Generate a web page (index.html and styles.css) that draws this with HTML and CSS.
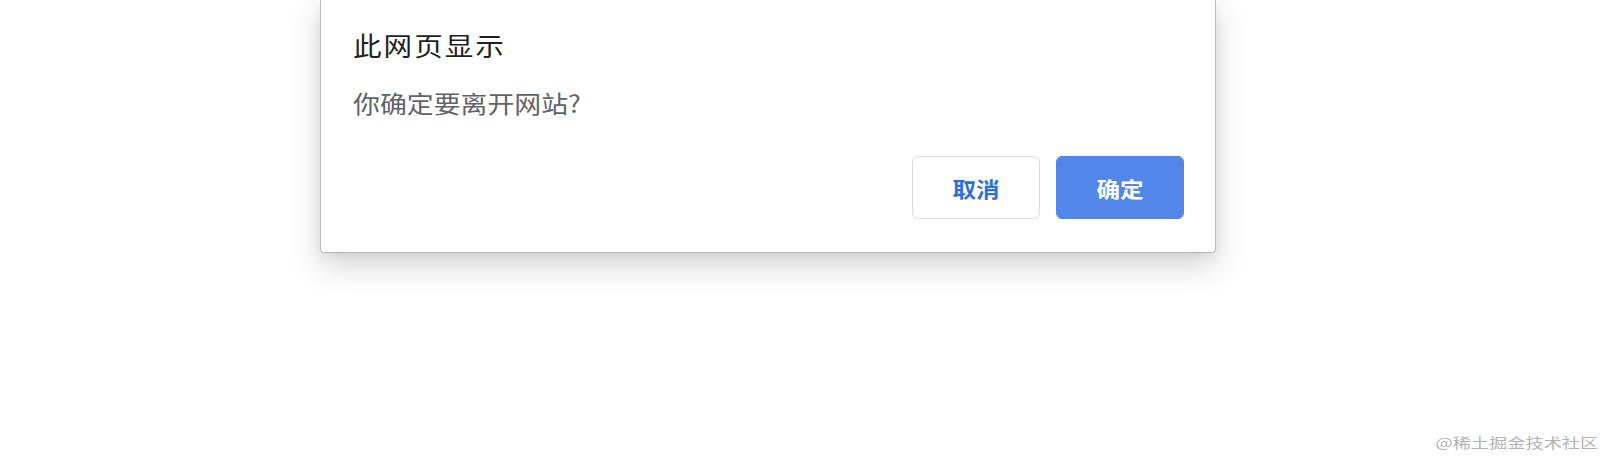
FILE: index.html
```html
<!DOCTYPE html>
<html lang="zh">
<head>
<meta charset="utf-8">
<title>此网页显示</title>
<link rel="stylesheet" href="styles.css">
</head>
<body>
<div class="dialog">
  <div class="title"><span class="wide">此网页显示</span></div>
  <div class="message"><span class="wide">你确定要离开网站?</span></div>
  <div class="actions">
    <button class="btn btn-cancel"><span class="wide">取消</span></button>
    <button class="btn btn-ok"><span class="wide">确定</span></button>
  </div>
</div>
<div class="watermark"><span class="wide">@稀土掘金技术社区</span></div>
</body>
</html>
```

FILE: styles.css
```css
html, body {
  margin: 0;
  padding: 0;
  background: #ffffff;
  width: 1602px;
  height: 460px;
  overflow: hidden;
  font-family: "Noto Sans CJK SC", "Noto Sans", sans-serif;
}

.dialog {
  box-sizing: border-box;
  width: 896px;
  margin-left: 320px;
  background: #ffffff;
  border: 1px solid #b9b9b9;
  border-top: none;
  border-radius: 0 0 4px 4px;
  box-shadow: 0 12px 32px rgba(0, 0, 0, 0.18), 0 2px 8px rgba(0, 0, 0, 0.06);
  padding: 29px 31px 33px 32px;
  display: flex;
  flex-direction: column;
}

.wide {
  display: inline-block;
  transform-origin: left center;
  white-space: nowrap;
}

.title {
  font-size: 26px;
  line-height: 32px;
  color: #1f1f1f;
}

.title .wide {
  letter-spacing: 1.8px;
  transform: scaleX(1.1);
}

.message {
  margin-top: 26px;
  font-size: 24px;
  line-height: 32px;
  color: #5f6368;
}

.message .wide {
  transform: scaleX(1.12);
}

.actions {
  margin-top: 37px;
  display: flex;
  justify-content: flex-end;
  gap: 16px;
}

.btn {
  box-sizing: border-box;
  width: 128px;
  height: 63px;
  border-radius: 6px;
  font-family: "Noto Sans CJK SC", "Noto Sans", sans-serif;
  font-size: 21px;
  font-weight: 700;
  display: flex;
  align-items: center;
  justify-content: center;
  padding: 0;
  cursor: pointer;
}

.btn .wide {
  transform-origin: center center;
  transform: scaleX(1.12);
}

.btn-cancel {
  background: #ffffff;
  border: 1px solid #dcdcdc;
  color: #2f6fd9;
}

.btn-ok {
  background: #5087e8;
  border: 1px solid #5087e8;
  color: #ffffff;
}

.watermark {
  position: absolute;
  right: 4px;
  bottom: 8px;
  font-size: 14px;
  line-height: 20px;
  color: #b3b3b3;
}

.watermark .wide {
  transform: scaleX(1.3);
  transform-origin: right center;
}
```
